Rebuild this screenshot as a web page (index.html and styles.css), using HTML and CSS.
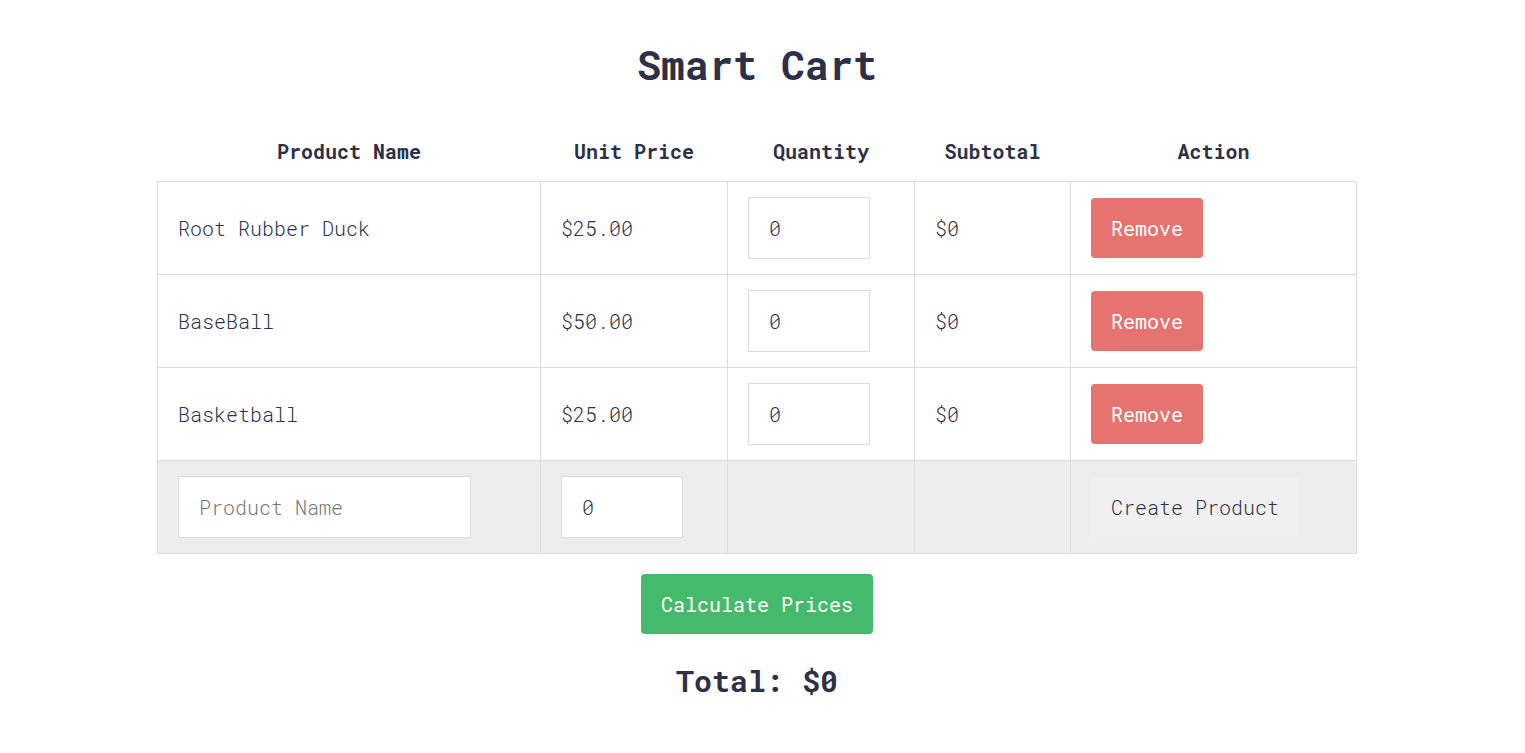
FILE: index.html
```html
<!DOCTYPE html>
<html>
<head>
<meta charset="utf-8">
<link rel="stylesheet" href="styles.css">
</head>
<body>
<div class="page">
  <h1 class="title">Smart Cart</h1>
  <table class="cart">
    <colgroup>
      <col class="c-name"><col class="c-price"><col class="c-qty"><col class="c-sub"><col class="c-act">
    </colgroup>
    <thead>
      <tr><th>Product Name</th><th>Unit Price</th><th>Quantity</th><th>Subtotal</th><th>Action</th></tr>
    </thead>
    <tbody>
      <tr>
        <td>Root Rubber Duck</td><td>$25.00</td>
        <td><input class="field qty" type="text" value="0"></td>
        <td>$0</td>
        <td><button class="btn remove">Remove</button></td>
      </tr>
      <tr>
        <td>BaseBall</td><td>$50.00</td>
        <td><input class="field qty" type="text" value="0"></td>
        <td>$0</td>
        <td><button class="btn remove">Remove</button></td>
      </tr>
      <tr>
        <td>Basketball</td><td>$25.00</td>
        <td><input class="field qty" type="text" value="0"></td>
        <td>$0</td>
        <td><button class="btn remove">Remove</button></td>
      </tr>
    </tbody>
    <tfoot>
      <tr class="create-row">
        <td><input class="field pname" type="text" placeholder="Product Name"></td>
        <td><input class="field qty" type="text" value="0"></td>
        <td></td>
        <td></td>
        <td><button class="btn create">Create Product</button></td>
      </tr>
    </tfoot>
  </table>
  <button class="btn calc">Calculate Prices</button>
  <h2 class="total">Total: $0</h2>
</div>
</body>
</html>
```
FILE: styles.css
```css
html, body {
  margin: 0;
  padding: 0;
  background: #ffffff;
}
body {
  font-family: "Roboto Mono", "DejaVu Sans Mono", "Liberation Mono", monospace;
  color: #2e3047;
  font-weight: 300;
}
.page {
  display: flex;
  flex-direction: column;
  align-items: center;
  padding-right: 11px;
}
.title {
  margin: 0;
  padding-top: 41px;
  font-size: 40px;
  line-height: 48px;
  font-weight: 700;
}
.cart {
  margin-top: 37px;
  width: 1199px;
  border-collapse: collapse;
  table-layout: fixed;
  font-size: 20px;
}
.c-name { width: 383px; }
.c-price { width: 187px; }
.c-qty { width: 187px; }
.c-sub { width: 156px; }
.c-act { width: 286px; }
.cart th {
  font-weight: 700;
  text-align: center;
  padding: 13px 0 18px;
  line-height: 24px;
}
.cart td {
  border: 1px solid #dcdcdc;
  padding: 15px 20px;
  height: 62px;
  line-height: 24px;
  text-align: left;
  vertical-align: middle;
  box-sizing: content-box;
}
.create-row td {
  background: #ededed;
}
.field {
  box-sizing: border-box;
  height: 62px;
  border: 1px solid #dcdcdc;
  background: #ffffff;
  font-family: inherit;
  font-size: 20px;
  font-weight: 300;
  color: #2e3047;
  padding: 0 20px;
  margin: 0;
  display: block;
  outline: none;
}
.field::placeholder {
  color: #777777;
}
.qty { width: 122px; }
.pname { width: 293px; }
.btn {
  font-family: inherit;
  font-size: 20px;
  font-weight: 300;
  line-height: 24px;
  border: none;
  border-radius: 4px;
  padding: 18px 20px;
  margin: 0;
  cursor: pointer;
  display: block;
}
.remove {
  background: #e5736f;
  color: #ffffff;
  font-weight: 400;
}
.create {
  background: #f0f0f0;
  color: #2e3047;
}
.calc {
  margin-top: 20px;
  background: #46ba6c;
  color: #ffffff;
  font-weight: 400;
}
.total {
  margin: 29px 0 0;
  font-size: 30px;
  line-height: 36px;
  font-weight: 700;
}
```
